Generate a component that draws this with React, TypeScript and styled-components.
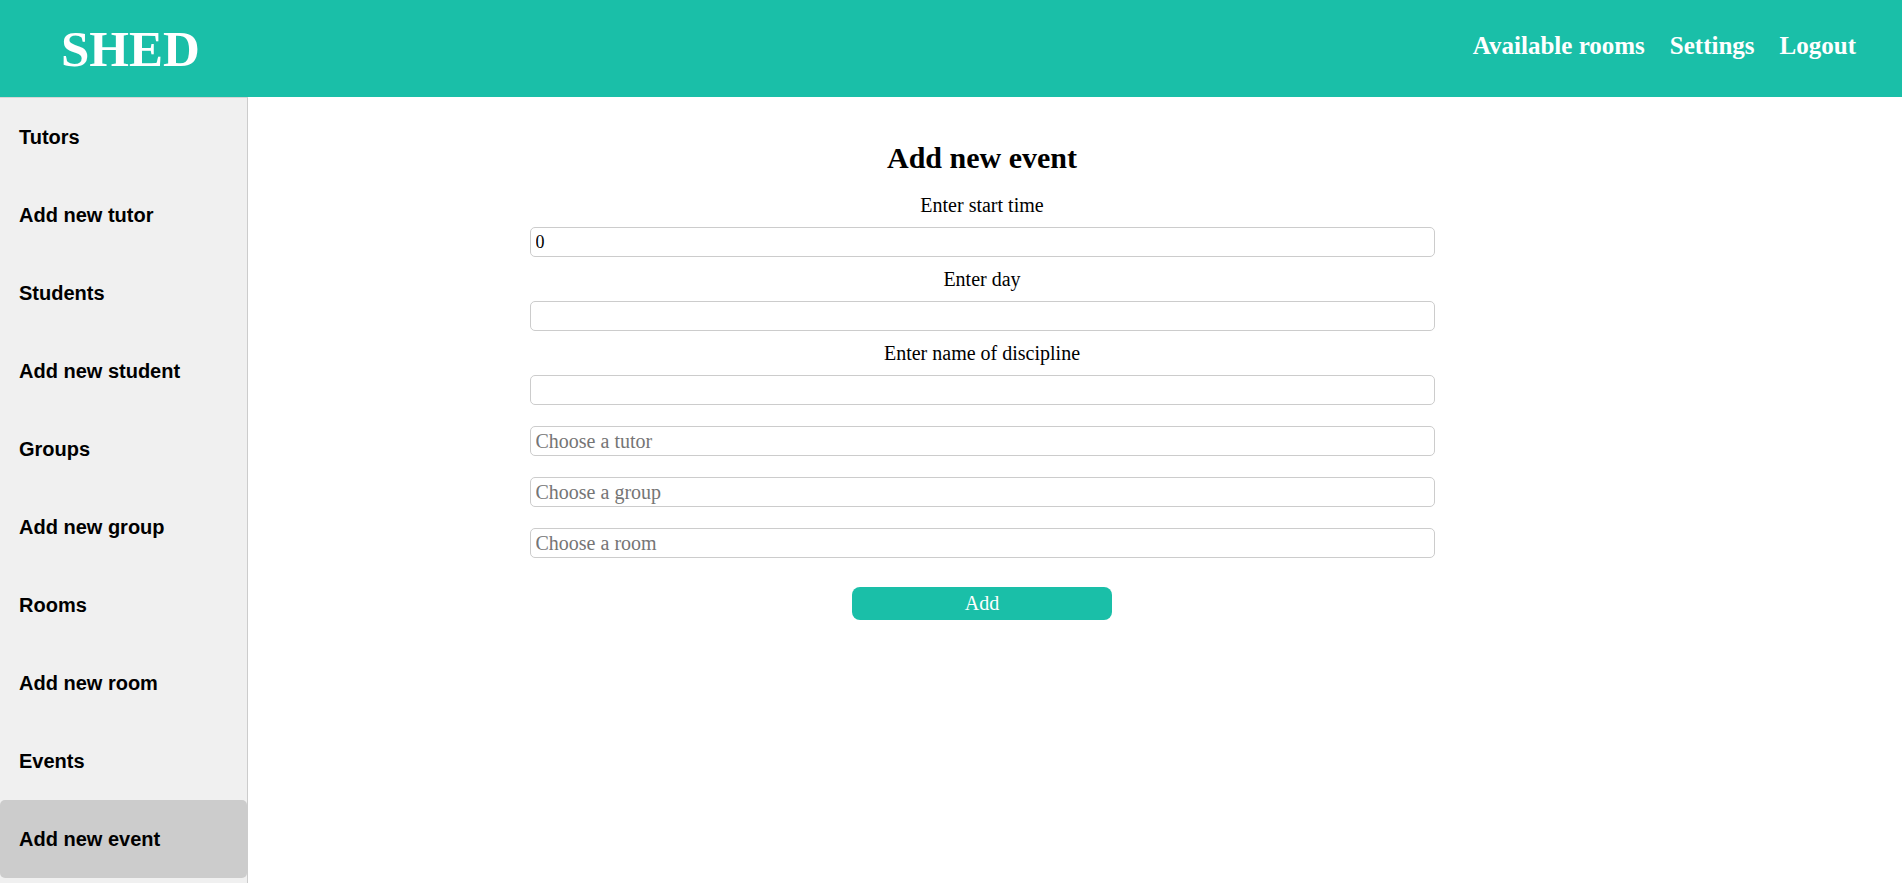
import React from "react";
import styled, { createGlobalStyle } from "styled-components";

const GlobalStyle = createGlobalStyle`
  html, body { margin: 0; padding: 0; background: #fff; }
  body { font-family: "Liberation Serif", "Times New Roman", serif; }
  * { box-sizing: border-box; }
`;

const Page = styled.div`
  display: flex;
  flex-direction: column;
  height: 100vh;
  overflow: hidden;
`;

const Header = styled.header`
  height: 97px;
  flex: none;
  background: #1abfa8;
  display: flex;
  align-items: center;
  justify-content: space-between;
  padding: 0 46px 0 61px;
`;

const Logo = styled.div`
  font-family: "Liberation Serif", "Times New Roman", serif;
  font-weight: bold;
  font-size: 51px;
  color: #fff;
  line-height: 56px;
`;

const Nav = styled.nav`
  display: flex;
  gap: 25px;
  margin-bottom: 5px;
`;

const NavLink = styled.a`
  font-family: "Liberation Serif", "Times New Roman", serif;
  font-weight: bold;
  font-size: 25px;
  color: #fff;
  text-decoration: none;
  cursor: pointer;
`;

const Body = styled.div`
  flex: 1;
  display: flex;
  min-height: 0;
`;

const Sidebar = styled.aside`
  width: 248px;
  flex: none;
  background: #f0f0f0;
  border-top: 1px solid #d6d6d6;
  border-right: 1px solid #cccccc;
  display: flex;
  flex-direction: column;
`;

const SideItem = styled.div<{ $active?: boolean }>`
  height: 78px;
  flex: none;
  display: flex;
  align-items: center;
  padding-left: 19px;
  font-family: "Liberation Sans", Arial, sans-serif;
  font-weight: bold;
  font-size: 20px;
  color: #000;
  border-radius: 5px;
  background: ${(p) => (p.$active ? "#cccccc" : "transparent")};
  cursor: pointer;
`;

const Main = styled.main`
  flex: 1;
  display: flex;
  justify-content: center;
  padding: 45px 186px 0 0;
`;

const Form = styled.form`
  width: 905px;
  display: flex;
  flex-direction: column;
  align-items: center;
`;

const Title = styled.h2`
  margin: 0;
  font-size: 30px;
  line-height: 32px;
  font-weight: bold;
  color: #000;
`;

const Label = styled.label<{ $first?: boolean }>`
  display: block;
  font-size: 20px;
  line-height: 21px;
  color: #000;
  margin-top: ${(p) => (p.$first ? "21px" : "12px")};
  margin-bottom: 11px;
`;

const Input = styled.input<{ $gap?: number; $big?: boolean }>`
  width: 100%;
  height: 30px;
  border: 1px solid #cccccc;
  border-radius: 5px;
  padding: 0 5px;
  margin-top: ${(p) => (p.$gap ? `${p.$gap}px` : "0")};
  font-family: "Liberation Serif", "Times New Roman", serif;
  font-size: ${(p) => (p.$big ? "20px" : "18px")};
  color: #000;
  outline: none;
  background: #fff;
  &::placeholder {
    color: #757575;
  }
`;

const Button = styled.button`
  margin-top: 29px;
  width: 260px;
  height: 33px;
  border: none;
  border-radius: 8px;
  background: #1abfa8;
  color: #fff;
  font-family: "Liberation Serif", "Times New Roman", serif;
  font-size: 20px;
  cursor: pointer;
`;

const items = [
  "Tutors",
  "Add new tutor",
  "Students",
  "Add new student",
  "Groups",
  "Add new group",
  "Rooms",
  "Add new room",
  "Events",
  "Add new event",
];

export default function App() {
  return (
    <>
      <GlobalStyle />
      <Page>
        <Header>
          <Logo>SHED</Logo>
          <Nav>
            <NavLink>Available rooms</NavLink>
            <NavLink>Settings</NavLink>
            <NavLink>Logout</NavLink>
          </Nav>
        </Header>
        <Body>
          <Sidebar>
            {items.map((it) => (
              <SideItem key={it} $active={it === "Add new event"}>
                {it}
              </SideItem>
            ))}
          </Sidebar>
          <Main>
            <Form onSubmit={(e) => e.preventDefault()}>
              <Title>Add new event</Title>
              <Label $first>Enter start time</Label>
              <Input type="number" defaultValue={0} />
              <Label>Enter day</Label>
              <Input type="text" />
              <Label>Enter name of discipline</Label>
              <Input type="text" />
              <Input $gap={21} $big placeholder="Choose a tutor" />
              <Input $gap={21} $big placeholder="Choose a group" />
              <Input $gap={21} $big placeholder="Choose a room" />
              <Button type="submit">Add</Button>
            </Form>
          </Main>
        </Body>
      </Page>
    </>
  );
}
